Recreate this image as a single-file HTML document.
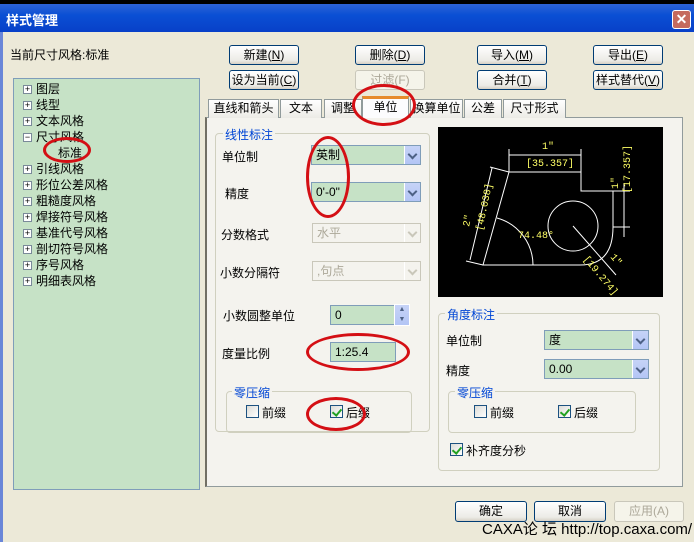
<!DOCTYPE html>
<html><head><meta charset="utf-8"><style>
*{margin:0;padding:0;box-sizing:border-box}
body{width:694px;height:542px;overflow:hidden;background:#ece9d8;font-family:"Liberation Sans","Noto Sans CJK SC","WenQuanYi Zen Hei",sans-serif;font-size:12px;color:#000;position:relative}
.a{position:absolute;white-space:nowrap}
.btn{position:absolute;width:70px;height:20px;border:1px solid #003c74;border-radius:3px;background:linear-gradient(#fff,#ecebe6 80%,#d6d0c5);text-align:center;line-height:18px;font-size:12px}
.dis{color:#aca899;border-color:#c9c7ba;background:#f5f4ea}
.tab{position:absolute;top:99px;height:19px;border:1px solid #919b9c;border-bottom:none;background:linear-gradient(#fff,#ecebe6);text-align:center;line-height:17px;font-size:12px}
.grp{position:absolute;border:1px solid #d0d0bf;border-radius:4px}
.gl{position:absolute;color:#0046d5;background:#f4f3ee;padding:0 2px;font-size:12px}
.cb{position:absolute;height:20px;border:1px solid #7f9db9;background:#c6e2c6;line-height:18px;padding-left:4px;font-size:12px}
.cb .ar{position:absolute;right:0;top:0;width:16px;height:18px;background:linear-gradient(#c6d3f7,#b3c5f5);border-left:1px solid #fff}
.cb .ar::after{content:"";position:absolute;left:4px;top:5px;width:5px;height:5px;border-right:2px solid #4d6185;border-bottom:2px solid #4d6185;transform:rotate(45deg)}
.cbd{background:#f4f3ee;border-color:#c9c7ba;color:#aca899}
.cbd .ar{background:#f4f3ee}
.cbd .ar::after{border-color:#c9c7ba}
.chk{position:absolute;width:13px;height:13px;border:1px solid #1c5180;background:linear-gradient(135deg,#dcdcd7,#fff)}
.chk.on::after{content:"";position:absolute;left:3px;top:1px;width:4px;height:7px;border-right:2px solid #21a121;border-bottom:2px solid #21a121;transform:rotate(40deg)}
.tree div{height:16px;line-height:16px;position:relative;padding-left:22px}
.tree .pb{position:absolute;left:9px;top:4px;width:9px;height:9px;border:1px solid #7a8a99;background:#fff;font-size:9px;line-height:7px;text-align:center}
.red{position:absolute;border:3px solid #d40f14;border-radius:50%}
</style></head><body>
<div class="a" style="left:0;top:0;width:694px;height:4px;background:#000"></div>
<div class="a" style="left:0;top:4px;width:694px;height:28px;background:linear-gradient(#2d63d6,#0a4fd4 40%,#0840c8)"></div>
<div class="a" style="left:6px;top:10px;color:#fff;font-weight:bold;font-size:13px">样式管理</div>
<div class="a" style="left:672px;top:10px;width:19px;height:19px;border:1px solid #fff;border-radius:3px;background:#c56a5e;color:#fff;text-align:center;line-height:17px;font-weight:bold;font-size:14px">✕</div>
<div class="a" style="left:0;top:32px;width:3px;height:510px;background:#6a86d8"></div>

<div class="a" style="left:10px;top:46px">当前尺寸风格:标准</div>
<div class="btn" style="left:229px;top:45px">新建(<u>N</u>)</div>
<div class="btn" style="left:229px;top:70px">设为当前(<u>C</u>)</div>
<div class="btn" style="left:355px;top:45px">删除(<u>D</u>)</div>
<div class="btn dis" style="left:355px;top:70px">过滤(F)</div>
<div class="btn" style="left:477px;top:45px">导入(<u>M</u>)</div>
<div class="btn" style="left:477px;top:70px">合并(<u>T</u>)</div>
<div class="btn" style="left:593px;top:45px">导出(<u>E</u>)</div>
<div class="btn" style="left:593px;top:70px">样式替代(<u>V</u>)</div>

<div class="a tree" style="left:13px;top:78px;width:187px;height:412px;background:#c6e2c6;border:1px solid #7f9db9;padding-top:2px">
<div><span class="pb">+</span>图层</div>
<div><span class="pb">+</span>线型</div>
<div><span class="pb">+</span>文本风格</div>
<div><span class="pb">−</span>尺寸风格</div>
<div style="padding-left:44px">标准</div>
<div><span class="pb">+</span>引线风格</div>
<div><span class="pb">+</span>形位公差风格</div>
<div><span class="pb">+</span>粗糙度风格</div>
<div><span class="pb">+</span>焊接符号风格</div>
<div><span class="pb">+</span>基准代号风格</div>
<div><span class="pb">+</span>剖切符号风格</div>
<div><span class="pb">+</span>序号风格</div>
<div><span class="pb">+</span>明细表风格</div>
</div>

<div class="a" style="left:205px;top:117px;width:478px;height:370px;border:1px solid #919b9c;border-left:2px solid #716f64;background:#f4f3ee"></div>
<div class="tab" style="left:208px;width:71px">直线和箭头</div>
<div class="tab" style="left:280px;width:42px">文本</div>
<div class="tab" style="left:324px;width:38px">调整</div>
<div class="tab" style="left:362px;width:47px;top:96px;height:22px;background:#fcfcfe;border-top:3px solid #e68b2c">单位</div>
<div class="tab" style="left:410px;width:53px">换算单位</div>
<div class="tab" style="left:464px;width:38px">公差</div>
<div class="tab" style="left:503px;width:63px">尺寸形式</div>

<div class="grp" style="left:215px;top:133px;width:215px;height:299px"></div>
<div class="gl" style="left:223px;top:126px">线性标注</div>
<div class="a" style="left:222px;top:148px">单位制</div>
<div class="cb" style="left:311px;top:145px;width:110px">英制<span class="ar"></span></div>
<div class="a" style="left:225px;top:185px">精度</div>
<div class="cb" style="left:311px;top:182px;width:110px">0'-0"<span class="ar"></span></div>
<div class="a" style="left:221px;top:226px">分数格式</div>
<div class="cb cbd" style="left:312px;top:223px;width:109px">水平<span class="ar"></span></div>
<div class="a" style="left:220px;top:264px">小数分隔符</div>
<div class="cb cbd" style="left:312px;top:261px;width:109px">,句点<span class="ar"></span></div>
<div class="a" style="left:223px;top:307px">小数圆整单位</div>
<div class="cb" style="left:330px;top:305px;width:65px">0</div>
<div class="a" style="left:394px;top:304px;width:16px;height:22px;background:linear-gradient(#c6d3f7,#b3c5f5);border:1px solid #fff;font-size:7px;line-height:10px;text-align:center;color:#4d6185">▲<br>▼</div>
<div class="a" style="left:222px;top:345px">度量比例</div>
<div class="cb" style="left:330px;top:342px;width:66px">1:25.4</div>
<div class="grp" style="left:226px;top:391px;width:186px;height:42px"></div>
<div class="gl" style="left:232px;top:384px">零压缩</div>
<div class="chk" style="left:246px;top:405px"></div><div class="a" style="left:262px;top:404px">前缀</div>
<div class="chk on" style="left:330px;top:405px"></div><div class="a" style="left:346px;top:404px">后缀</div>

<div class="a" style="left:438px;top:127px;width:225px;height:170px;background:#000"></div>
<svg class="a" style="left:438px;top:127px" width="225" height="170" viewBox="0 0 225 170">
<g stroke="#fff" fill="none" stroke-width="1">
<path d="M71 45 L143 45 L143 64 L175 64 L175 100 Q175 138 142 138 L45 138 L71 45"/>
<path d="M71 22 L71 45 M143 22 L143 45 M71 28 L143 28"/>
<path d="M175 64 L192 64 M175 100 L192 100 M186 56 L186 110"/>
<path d="M71 45 L52 40 M45 138 L28 134 M54 41 L32 133"/>
<path d="M59 91 A49 49 0 0 1 95 138"/>
<circle cx="135" cy="99" r="25"/>
<path d="M135 99 L178 148"/>
</g>
<g fill="#ff6" font-family="Liberation Mono,monospace" font-size="10">
<text x="104" y="22">1"</text><text x="88" y="39">[35.357]</text>
<text x="80" y="111">74.48°</text>
<text transform="translate(180 62) rotate(-90)">1"</text><text transform="translate(192 66) rotate(-90)">[17.357]</text>
<text transform="translate(44 104) rotate(-78)">[48.038]</text><text transform="translate(31 100) rotate(-78)">2"</text>
<text transform="translate(145 132) rotate(50)">[19.274]</text><text transform="translate(172 130) rotate(50)">1"</text>
</g></svg>

<div class="grp" style="left:438px;top:313px;width:222px;height:158px"></div>
<div class="gl" style="left:445px;top:306px">角度标注</div>
<div class="a" style="left:446px;top:332px">单位制</div>
<div class="cb" style="left:544px;top:330px;width:105px">度<span class="ar"></span></div>
<div class="a" style="left:446px;top:362px">精度</div>
<div class="cb" style="left:544px;top:359px;width:105px">0.00<span class="ar"></span></div>
<div class="grp" style="left:448px;top:391px;width:188px;height:42px"></div>
<div class="gl" style="left:455px;top:384px">零压缩</div>
<div class="chk" style="left:474px;top:405px"></div><div class="a" style="left:490px;top:404px">前缀</div>
<div class="chk on" style="left:558px;top:405px"></div><div class="a" style="left:574px;top:404px">后缀</div>
<div class="chk on" style="left:450px;top:443px"></div><div class="a" style="left:466px;top:442px">补齐度分秒</div>

<div class="btn" style="left:455px;top:501px;width:72px;height:21px">确定</div>
<div class="btn" style="left:534px;top:501px;width:72px;height:21px">取消</div>
<div class="btn dis" style="left:614px;top:501px;width:70px;height:21px">应用(A)</div>
<div class="a" style="left:482px;top:518px;font-size:15px;color:#000">CAXA论 坛 http://top.caxa.com/</div>

<div class="red" style="left:306px;top:136px;width:44px;height:82px"></div>
<div class="red" style="left:352px;top:84px;width:64px;height:42px"></div>
<div class="red" style="left:43px;top:137px;width:48px;height:26px"></div>
<div class="red" style="left:306px;top:333px;width:104px;height:38px"></div>
<div class="red" style="left:306px;top:397px;width:60px;height:34px"></div>
</body></html>
